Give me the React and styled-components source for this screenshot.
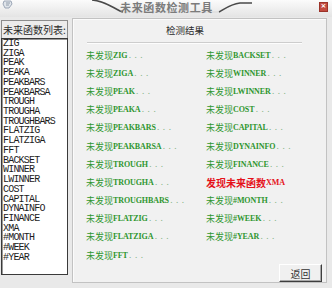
import styled, { createGlobalStyle } from "styled-components";

const GlobalStyle = createGlobalStyle`
  html, body {
    margin: 0;
    padding: 0;
  }
  body {
    width: 332px;
    height: 288px;
    overflow: hidden;
    background: #e8e8e8;
  }
`;

const Window = styled.div`
  width: 332px;
  height: 288px;
  display: flex;
  flex-direction: column;
  background: #e9e9e9;
  font-family: "Noto Sans CJK SC", sans-serif;
`;

const TitleBar = styled.div`
  position: relative;
  flex: none;
  height: 17px;
  display: flex;
  align-items: center;
  padding: 0 4px 0 2px;
  background: linear-gradient(#fbfbfb, #e4e4e4);
`;

const Swoosh = styled.svg`
  position: absolute;
  left: 0;
  top: 0;
`;

const AppIcon = styled.svg`
  flex: none;
  align-self: flex-start;
`;

const Title = styled.div`
  position: relative;
  flex: 1;
  text-align: center;
  font-size: 11px;
  font-weight: 700;
  line-height: 14px;
  margin-top: -3px;
  letter-spacing: 0.6px;
  color: #7b7b7b;
`;

const CloseButton = styled.div`
  flex: none;
  width: 7px;
  height: 8px;
  margin-top: -4px;
  background: #c24a3e;
  border: 1px solid #9b3329;
  display: flex;
  align-items: center;
  justify-content: center;
  color: #fff;
  font: 700 7px/1 "DejaVu Sans", sans-serif;
`;

const Body = styled.div`
  flex: 1;
  display: flex;
  gap: 4px;
  padding: 1px 5px 5px 1px;
  min-height: 0;
`;

const LeftColumn = styled.div`
  width: 67px;
  display: flex;
  flex-direction: column;
  margin: 2px 0 8px;
`;

const ListLabel = styled.div`
  height: 18px;
  box-sizing: border-box;
  border: 1px solid #8c8c8c;
  border-bottom: none;
  background: #ececec;
  padding-left: 1px;
  font-size: 10px;
  line-height: 17px;
  color: #2a2a2a;
  white-space: nowrap;
`;

const FunctionList = styled.div`
  flex: 1;
  background: #fff;
  border: 1px solid #3a3a3a;
  box-shadow: inset 1px 1px 0 #9a9a9a;
  padding: 0 0 0 1px;
  overflow: hidden;
`;

const ListItem = styled.div`
  font-family: "Liberation Mono", monospace;
  font-size: 10px;
  letter-spacing: -0.8px;
  line-height: 9.73px;
  height: 9.73px;
  color: #1c1c1c;
  white-space: nowrap;
`;

const ResultPanel = styled.div`
  flex: 1;
  display: flex;
  flex-direction: column;
  border: 1px solid #c2c2c2;
  box-shadow: inset 1px 1px 0 #fbfbfb;
  background: #f1f1f1;
`;

const PanelHeader = styled.div`
  margin: 5px 0 0 93px;
  font-size: 9.5px;
  line-height: 12px;
  color: #2a2a2a;
`;

const Divider = styled.div`
  margin: 6px 0 0 14px;
  width: 215px;
  border-top: 1px solid #cdcdcd;
  border-bottom: 1px solid #fdfdfd;
`;

const ResultColumns = styled.div`
  display: flex;
  margin: 2px 0 0 13px;
`;

const ResultColumn = styled.div`
  width: ${(p) => p.$width}px;
  display: flex;
  flex-direction: column;
`;

const ResultRow = styled.div`
  height: 18.2px;
  display: flex;
  align-items: center;
  white-space: nowrap;
  font-size: ${(p) => (p.$found ? 10 : 9)}px;
  font-weight: ${(p) => (p.$found ? 700 : 400)};
  color: ${(p) => (p.$found ? "#e5121a" : "#2f962f")};
`;

const Term = styled.span`
  font-family: "Liberation Serif", serif;
  font-weight: 700;
  font-size: 8px;
  letter-spacing: -0.1px;
`;

const Dots = styled.span`
  font-family: "Liberation Mono", monospace;
  font-size: 8px;
  letter-spacing: 1px;
  color: #86b486;
`;

const ReturnButton = styled.button`
  align-self: flex-end;
  margin: auto 4px 0 0;
  width: 43px;
  height: 19px;
  padding: 0;
  background: #f0f0f0;
  border: 1px solid;
  border-color: #ffffff #3e3e3e #3e3e3e #ffffff;
  box-shadow: inset -1px -1px 0 #a8a8a8;
  font-family: "Noto Sans CJK SC", sans-serif;
  font-size: 10px;
  color: #333;
`;

const functions = [
  "ZIG", "ZIGA", "PEAK", "PEAKA", "PEAKBARS", "PEAKBARSA", "TROUGH",
  "TROUGHA", "TROUGHBARS", "FLATZIG", "FLATZIGA", "FFT", "BACKSET",
  "WINNER", "LWINNER", "COST", "CAPITAL", "DYNAINFO", "FINANCE", "XMA",
  "#MONTH", "#WEEK", "#YEAR",
];

const leftResults = functions.slice(0, 12);
const rightResults = functions.slice(12);

function Result({ name }) {
  if (name === "XMA") {
    return (
      <ResultRow $found>
        发现未来函数<Term>{name}</Term>
      </ResultRow>
    );
  }
  return (
    <ResultRow>
      未发现<Term>{name}</Term>
      <Dots>...</Dots>
    </ResultRow>
  );
}

export default function App() {
  return (
    <>
      <GlobalStyle />
      <Window>
        <TitleBar>
          <Swoosh width="332" height="17" viewBox="0 0 332 17">
            <path d="M92 0 C104 1 110 6 120 11 L123 12" fill="none" stroke="#4a4a4a" strokeWidth="1.6" />
            <path d="M219 12 C226 8 231 4 240 3 L252 3" fill="none" stroke="#4a4a4a" strokeWidth="1.6" />
            <path d="M123 12 L219 12" fill="none" stroke="#d8d8d8" strokeWidth="1" />
          </Swoosh>
          <AppIcon width="12" height="9" viewBox="0 0 12 9">
            <path d="M2 1 L9 1 L10 4 L7 8 L3 8 L1 4 Z" fill="#dfe4ea" stroke="#8996a8" strokeWidth="0.8" />
            <path d="M4 3 L8 3 M4 5 L7 5" stroke="#7d8a9c" strokeWidth="0.8" />
          </AppIcon>
          <Title>未来函数检测工具</Title>
          <CloseButton>×</CloseButton>
        </TitleBar>
        <Body>
          <LeftColumn>
            <ListLabel>未来函数列表:</ListLabel>
            <FunctionList>
              {functions.map((f) => (
                <ListItem key={f}>{f}</ListItem>
              ))}
            </FunctionList>
          </LeftColumn>
          <ResultPanel>
            <PanelHeader>检测结果</PanelHeader>
            <Divider />
            <ResultColumns>
              <ResultColumn $width={120}>
                {leftResults.map((f) => (
                  <Result key={f} name={f} />
                ))}
              </ResultColumn>
              <ResultColumn $width={110}>
                {rightResults.map((f) => (
                  <Result key={f} name={f} />
                ))}
              </ResultColumn>
            </ResultColumns>
            <ReturnButton>返回</ReturnButton>
          </ResultPanel>
        </Body>
      </Window>
    </>
  );
}
